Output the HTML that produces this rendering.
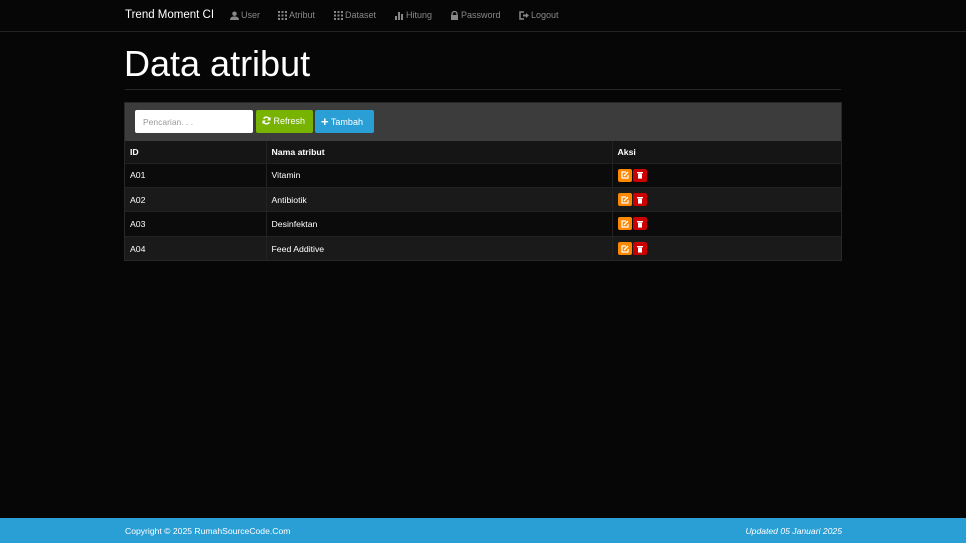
<!DOCTYPE html>
<html><head><meta charset="utf-8"><style>
*{box-sizing:border-box;margin:0;padding:0}
body{width:966px;height:543px;background:#060606;font-family:"Liberation Sans",sans-serif;color:#fff;position:relative;overflow:hidden;font-size:10px}
.nav{height:32px;border-bottom:1px solid #222;background:#060606;position:relative}
.brand{position:absolute;left:125px;top:9px;font-size:11.5px;color:#fff}
.links span{position:absolute;top:10px;font-size:9px;color:#888;display:flex;align-items:center;white-space:nowrap}
.links svg{margin-right:2px}
h1{position:absolute;left:124px;top:43px;font-size:36px;font-weight:normal;color:#fff}
.hr{position:absolute;left:125px;width:716px;top:89px;border-top:1px solid #282828}
.panel{position:absolute;left:124px;top:102px;width:718px;height:159px;border:1px solid #282828;background:#0a0a0a;overflow:hidden}
.ph{height:38px;background:#3c3c3c;position:relative}
.inp{position:absolute;left:10px;top:7px;width:118px;height:23px;background:#fff;border-radius:2px;color:#999;font-size:8.5px;padding:7px 8px}
.btn{position:absolute;top:7px;height:23px;border-radius:2px;font-size:9px;color:#fff;padding:0 6px;line-height:23px;white-space:nowrap}
table{border-collapse:collapse;width:100%;table-layout:fixed}
td,th{height:24.4px;padding:0 5px;text-align:left;font-size:8.7px;border-right:1px solid #222;overflow:hidden;white-space:nowrap}
th{font-weight:bold;background:#151515;height:22px}
tr:nth-child(odd) td{background:#1a1a1a}
tr:nth-child(even) td{background:#0b0b0b}
td{border-top:1px solid #222}
.ic{display:inline-block;width:14px;height:13px;border-radius:2px;vertical-align:middle;margin-right:1px;position:relative}
.ic svg{position:absolute;left:3px;top:2.5px}
.foot{position:absolute;left:0;top:518px;width:966px;height:25px;background:#2a9fd6;font-size:8.6px;color:#fff}
</style></head><body>
<div class="nav"><div class="brand">Trend Moment CI</div>
<div class="links">
<span style="left:230px"><svg width="9" height="9" viewBox="0 0 10 10"><circle cx="5" cy="3" r="2.5" fill="#888"/><path d="M0 10Q0 6 5 6Q10 6 10 10Z" fill="#888"/></svg>User</span>
<span style="left:278px"><svg width="9" height="9" viewBox="0 0 9 9" fill="#888"><rect x="0" y="0" width="2" height="2"/><rect x="3.5" y="0" width="2" height="2"/><rect x="7" y="0" width="2" height="2"/><rect x="0" y="3.5" width="2" height="2"/><rect x="3.5" y="3.5" width="2" height="2"/><rect x="7" y="3.5" width="2" height="2"/><rect x="0" y="7" width="2" height="2"/><rect x="3.5" y="7" width="2" height="2"/><rect x="7" y="7" width="2" height="2"/></svg>Atribut</span>
<span style="left:334px"><svg width="9" height="9" viewBox="0 0 9 9" fill="#888"><rect x="0" y="0" width="2" height="2"/><rect x="3.5" y="0" width="2" height="2"/><rect x="7" y="0" width="2" height="2"/><rect x="0" y="3.5" width="2" height="2"/><rect x="3.5" y="3.5" width="2" height="2"/><rect x="7" y="3.5" width="2" height="2"/><rect x="0" y="7" width="2" height="2"/><rect x="3.5" y="7" width="2" height="2"/><rect x="7" y="7" width="2" height="2"/></svg>Dataset</span>
<span style="left:395px"><svg width="9" height="9" viewBox="0 0 9 9" fill="#888"><rect x="0" y="5" width="2" height="4"/><rect x="3" y="1" width="2" height="8"/><rect x="6" y="3" width="2" height="6"/></svg>Hitung</span>
<span style="left:450px"><svg width="9" height="9" viewBox="0 0 9 9"><path d="M2 4V3a2.5 2.5 0 0 1 5 0v1" stroke="#888" fill="none" stroke-width="1.3"/><rect x="1" y="4" width="7" height="5" fill="#888"/></svg>Password</span>
<span style="left:519px"><svg width="10" height="9" viewBox="0 0 10 9"><path d="M5 1H1v7h4" stroke="#888" fill="none" stroke-width="1.5"/><path d="M4 3.5h3V2l3 2.5-3 2.5V5.5H4z" fill="#888"/></svg>Logout</span>
</div></div>
<h1>Data atribut</h1>
<div class="hr"></div>
<div class="panel">
<div class="ph"><div class="inp">Pencarian. . .</div>
<div class="btn" style="left:131px;background:#77b300;width:57px"><svg width="9" height="9" viewBox="0 0 10 10" style="vertical-align:-1px"><path d="M8.5 4A3.7 3.7 0 0 0 1.8 3M1.5 6A3.7 3.7 0 0 0 8.2 7" stroke="#fff" stroke-width="1.6" fill="none"/><path d="M9.5 1v4H5.5z M0.5 9V5h4z" fill="#fff"/></svg> Refresh</div>
<div class="btn" style="left:190px;background:#2a9fd6;width:59px"><b style="font-size:13px;vertical-align:-1px">+</b> Tambah</div></div>
<table>
<tr><th style="width:141px">ID</th><th style="width:346px">Nama atribut</th><th style="border-right:0">Aksi</th></tr>
<tr><td>A01</td><td>Vitamin</td><td style="border-right:0"><span class="ic" style="background:#f80"><svg width="8" height="8" viewBox="0 0 8 8"><path d="M5 1H1v6h6V4" stroke="#fff" fill="none" stroke-width="1.2"/><path d="M3 5l4-4" stroke="#fff" stroke-width="1.3"/></svg></span><span class="ic" style="background:#c00"><svg width="8" height="8" viewBox="0 0 8 8" fill="#fff"><rect x="1" y="1" width="6" height="1.3"/><rect x="2" y="2.6" width="4" height="5"/></svg></span></td></tr>
<tr><td>A02</td><td>Antibiotik</td><td style="border-right:0"><span class="ic" style="background:#f80"><svg width="8" height="8" viewBox="0 0 8 8"><path d="M5 1H1v6h6V4" stroke="#fff" fill="none" stroke-width="1.2"/><path d="M3 5l4-4" stroke="#fff" stroke-width="1.3"/></svg></span><span class="ic" style="background:#c00"><svg width="8" height="8" viewBox="0 0 8 8" fill="#fff"><rect x="1" y="1" width="6" height="1.3"/><rect x="2" y="2.6" width="4" height="5"/></svg></span></td></tr>
<tr><td>A03</td><td>Desinfektan</td><td style="border-right:0"><span class="ic" style="background:#f80"><svg width="8" height="8" viewBox="0 0 8 8"><path d="M5 1H1v6h6V4" stroke="#fff" fill="none" stroke-width="1.2"/><path d="M3 5l4-4" stroke="#fff" stroke-width="1.3"/></svg></span><span class="ic" style="background:#c00"><svg width="8" height="8" viewBox="0 0 8 8" fill="#fff"><rect x="1" y="1" width="6" height="1.3"/><rect x="2" y="2.6" width="4" height="5"/></svg></span></td></tr>
<tr><td>A04</td><td>Feed Additive</td><td style="border-right:0"><span class="ic" style="background:#f80"><svg width="8" height="8" viewBox="0 0 8 8"><path d="M5 1H1v6h6V4" stroke="#fff" fill="none" stroke-width="1.2"/><path d="M3 5l4-4" stroke="#fff" stroke-width="1.3"/></svg></span><span class="ic" style="background:#c00"><svg width="8" height="8" viewBox="0 0 8 8" fill="#fff"><rect x="1" y="1" width="6" height="1.3"/><rect x="2" y="2.6" width="4" height="5"/></svg></span></td></tr>
</table></div>
<div class="foot"><span style="position:absolute;left:125px;top:8px">Copyright © 2025 RumahSourceCode.Com</span><span style="position:absolute;right:124px;top:8px;font-style:italic">Updated 05 Januari 2025</span></div>
</body></html>
